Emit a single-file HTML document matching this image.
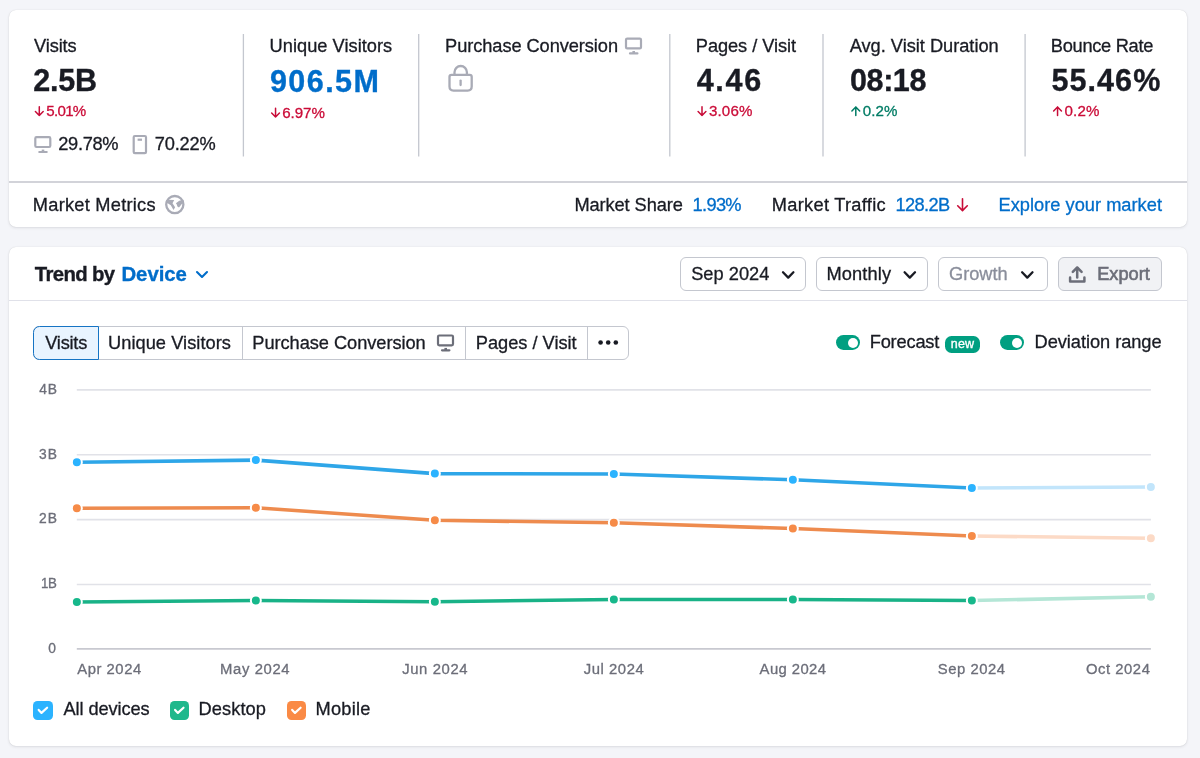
<!DOCTYPE html>
<html lang="en">
<head>
<meta charset="utf-8">
<title>Traffic Analytics – Trend by Device</title>
<style>
html,body{margin:0;padding:0;}
body{width:1200px;height:758px;overflow:hidden;background:#f4f5f9;font-family:"Liberation Sans",sans-serif;color:#191b23;}
#root{position:relative;width:1200px;height:758px;overflow:hidden;will-change:transform;}
.t{position:absolute;line-height:1;white-space:nowrap;-webkit-text-stroke:.3px currentColor;}
.t.b{-webkit-text-stroke:.35px currentColor;}
.t.m{-webkit-text-stroke:.6px currentColor;}
.t.n{-webkit-text-stroke:.35px currentColor;}
.card{position:absolute;background:#fff;border-radius:7px;box-shadow:0 0 1px rgba(25,27,35,.18),0 1px 3px rgba(25,27,35,.10);}
.vd{position:absolute;top:34px;height:122.6px;width:1.3px;background:#c4c7cf;}
.hd{position:absolute;left:9px;width:1178px;}
.btn{position:absolute;box-sizing:border-box;border:1px solid #c4c7cf;border-radius:6px;background:#fff;}
.tabs{position:absolute;box-sizing:border-box;border:1px solid #c4c7cf;border-radius:6px;background:#fff;}
.sep{position:absolute;width:1px;background:#c4c7cf;}
.tog{position:absolute;height:14.8px;width:24.6px;border-radius:7.4px;background:#009f81;}
.tog i{position:absolute;right:2px;top:2.2px;width:10.4px;height:10.4px;border-radius:50%;background:#fff;}
.cb{position:absolute;width:19.4px;height:19.4px;border-radius:4.5px;}
svg{position:absolute;left:0;top:0;overflow:visible;}
</style>
</head>
<body>
<div id="root">
<div class="card" style="left:9px;top:9.5px;width:1178px;height:217px;"></div>
<div class="card" style="left:9px;top:247px;width:1178px;height:499.3px;"></div>

<div class="hd" style="top:181px;height:2px;background:#d2d3d9;"></div>
<div class="hd" style="top:300px;height:1px;background:#e0e1e9;"></div>

<!-- header buttons -->
<div class="btn" style="left:680px;top:257px;width:126px;height:34px;"></div>
<div class="btn" style="left:816px;top:257px;width:112px;height:34px;"></div>
<div class="btn" style="left:938px;top:257px;width:110px;height:34px;"></div>
<div class="btn" style="left:1058px;top:257px;width:104px;height:34px;background:#f1f2f5;"></div>

<!-- tabs -->
<div class="tabs" style="left:33px;top:326px;width:596px;height:34px;"></div>
<div class="sep" style="left:241.5px;top:327px;height:32px;"></div>
<div class="sep" style="left:465px;top:327px;height:32px;"></div>
<div class="sep" style="left:587px;top:327px;height:32px;"></div>
<div style="position:absolute;box-sizing:border-box;left:33px;top:326px;width:66px;height:34px;border:1px solid #1674c4;border-radius:6.5px 0 0 6.5px;background:#e9f4ff;"></div>

<!-- toggles -->
<div class="tog" style="left:835.6px;top:335.4px;"><i></i></div>
<div class="tog" style="left:999.8px;top:335.4px;"><i></i></div>
<div style="position:absolute;left:944.7px;top:335.8px;width:35.4px;height:16.8px;border-radius:6.5px;background:#009f81;"></div>

<!-- legend checkboxes -->
<div class="cb" style="left:33.3px;top:700.5px;background:#2bb3ff;"></div>
<div class="cb" style="left:169.7px;top:700.5px;background:#1fb88c;"></div>
<div class="cb" style="left:286.8px;top:700.5px;background:#fa8a45;"></div>

<svg width="1200" height="758" viewBox="0 0 1200 758" fill="none">
<!-- metric dividers -->
<path d="M243.4 33.9V156.5M418.7 33.9V156.5M669.8 33.9V156.5M823 33.9V156.5M1025.1 33.9V156.5" stroke="#c4c7cf" stroke-width="1.3"/>
<!-- grid -->
<g stroke="#e1e2e8" stroke-width="1.6">
<path d="M76.8 389.9H1150.9M76.8 454.75H1150.9M76.8 519.6H1150.9M76.8 584.45H1150.9"/>
</g>
<path d="M76.8 648.9H1150.9" stroke="#c8c9d0" stroke-width="1.9"/>
<!-- forecast lines -->
<g stroke-width="3.6" stroke-linecap="butt" stroke-linejoin="round">
<path d="M971.85 488L1150.85 487" stroke="#c2e5fb"/>
<path d="M971.85 536L1150.85 538.3" stroke="#fcdac6"/>
<path d="M971.85 600.5L1150.85 596.8" stroke="#b4e6d6"/>
<path d="M76.85 462.3L255.85 460.1L434.85 473.6L613.85 474L792.85 479.8L971.85 488" stroke="#2ea6e8"/>
<path d="M76.85 508.3L255.85 507.8L434.85 520.3L613.85 522.8L792.85 528.5L971.85 536" stroke="#ee8b4e"/>
<path d="M76.85 602L255.85 600.5L434.85 601.7L613.85 599.5L792.85 599.5L971.85 600.5" stroke="#19b287"/>
</g>
<g stroke="#fff" stroke-width="2">
<g fill="#2bb3ff"><circle cx="76.85" cy="462.3" r="5"/><circle cx="255.85" cy="460.1" r="5"/><circle cx="434.85" cy="473.6" r="5"/><circle cx="613.85" cy="474" r="5"/><circle cx="792.85" cy="479.8" r="5"/><circle cx="971.85" cy="488" r="5"/></g>
<g fill="#f68b48"><circle cx="76.85" cy="508.3" r="5"/><circle cx="255.85" cy="507.8" r="5"/><circle cx="434.85" cy="520.3" r="5"/><circle cx="613.85" cy="522.8" r="5"/><circle cx="792.85" cy="528.5" r="5"/><circle cx="971.85" cy="536" r="5"/></g>
<g fill="#17b88b"><circle cx="76.85" cy="602" r="5"/><circle cx="255.85" cy="600.5" r="5"/><circle cx="434.85" cy="601.7" r="5"/><circle cx="613.85" cy="599.5" r="5"/><circle cx="792.85" cy="599.5" r="5"/><circle cx="971.85" cy="600.5" r="5"/></g>
<circle cx="1150.85" cy="487" r="5" fill="#c2e5fb"/><circle cx="1150.85" cy="538.3" r="5" fill="#fcdac6"/><circle cx="1150.85" cy="596.8" r="5" fill="#b4e6d6"/>
</g>

<!-- checkmarks -->
<g stroke="#fff" stroke-width="2.2" stroke-linecap="round" stroke-linejoin="round">
<path d="M38.7 709.9L41.5 712.9L47.1 707.7"/>
<path d="M175.1 709.9L177.9 712.9L183.5 707.7"/>
<path d="M292.2 709.9L295.0 712.9L300.6 707.7"/>
</g>

<!-- chevrons -->
<g stroke="#191b23" stroke-width="2.3" stroke-linecap="round" stroke-linejoin="round">
<path d="M783 272.3L788.2 277.6L793.4 272.3"/>
<path d="M904.6 272.3L909.8 277.6L915 272.3"/>
<path d="M1022.1 272.3L1027.3 277.6L1032.5 272.3"/>
</g>
<path d="M197 272L202 277L207 272" stroke="#006dca" stroke-width="2.1" stroke-linecap="round" stroke-linejoin="round"/>

<!-- more dots -->
<g fill="#191b23"><circle cx="600.6" cy="342.5" r="2.3"/><circle cx="608.2" cy="342.5" r="2.3"/><circle cx="615.8" cy="342.5" r="2.3"/></g>

<!-- desktop icons -->
<g stroke="#a9abb6" stroke-width="2.2" fill="none" stroke-linejoin="round">
<rect x="35.3" y="137.2" width="15" height="9.8" rx="1.2"/>
<path d="M39.3 152H46.7" stroke-linecap="round"/><path d="M43 149.6V152" stroke-width="2.6"/>
</g>
<g stroke="#a9abb6" stroke-width="2.2" fill="none" stroke-linejoin="round">
<rect x="626" y="38.6" width="15" height="9.8" rx="1.2"/>
<path d="M630 53.4H637.4" stroke-linecap="round"/><path d="M633.7 51V53.4" stroke-width="2.6"/>
</g>
<g stroke="#6c6e79" stroke-width="2.2" fill="none" stroke-linejoin="round">
<rect x="438" y="335.5" width="15" height="9.8" rx="1.2"/>
<path d="M442 350.3H449.4" stroke-linecap="round"/><path d="M445.7 347.9V350.3" stroke-width="2.6"/>
</g>
<!-- phone icon -->
<g stroke="#a9abb6" stroke-width="2.2" fill="none" stroke-linejoin="round">
<rect x="133.7" y="136" width="12.3" height="17.2" rx="1.2"/>
<path d="M137.6 139.7H142"/>
</g>
<!-- lock -->
<g stroke="#a9abb6" stroke-width="2.3" fill="none" stroke-linecap="round" stroke-linejoin="round">
<path d="M451.5 74.8H469.7Q471.7 74.8 471.7 76.8V86.6Q471.7 90.6 467.7 90.6H453.5Q449.5 90.6 449.5 86.6V76.8Q449.5 74.8 451.5 74.8Z"/>
<path d="M454.5 74.5V72.2A6.2 6.2 0 0 1 466.9 72.2V74.5"/>
<path d="M460.6 80.6V85"/>
</g>
<!-- globe -->
<g>
<circle cx="174.8" cy="204.6" r="8.6" stroke="#a9abb6" stroke-width="2.3"/>
<path d="M166 200.8L167.4 199.8L174.2 199.9L172.5 203.2L175.1 207.2L173.5 210L170.8 205.3L167.7 203.3L165.8 203Z" fill="#a9abb6"/>
<path d="M175.9 203.2L179.3 200.7L183.4 199.8L184 202.9L182.2 203.6L179 207.5L177.4 206.4L176.8 204.5Z" fill="#a9abb6"/>
</g>
<!-- export icon -->
<g stroke="#6c6e79" stroke-width="2.5" fill="none" stroke-linecap="round" stroke-linejoin="round">
<path d="M1070.1 277.6V281.5H1084.4V277.6"/>
<path d="M1077.2 277.4V268"/>
<path d="M1072.8 271.9L1077.2 267.5L1081.6 271.9"/>
</g>
<!-- arrows -->
<g stroke="#c80c38" stroke-width="1.5" fill="none" stroke-linecap="round" stroke-linejoin="round">
<path d="M39.3 106.8V115.5M35.4 111.5L39.3 115.5L43.199999999999996 111.5"/>
<path d="M275.55 108.3V117.0M271.65000000000003 113.0L275.55 117.0L279.45 113.0"/>
<path d="M702 106.8V115.5M698.1 111.5L702 115.5L705.9 111.5"/>
<path d="M1057.55 115.6V106.89999999999999M1053.6499999999999 110.89999999999999L1057.55 106.89999999999999L1061.45 110.89999999999999"/>
</g>
<path d="M855.8 115.6V106.89999999999999M851.9 110.89999999999999L855.8 106.89999999999999L859.6999999999999 110.89999999999999" stroke="#007c65" stroke-width="1.5" fill="none" stroke-linecap="round" stroke-linejoin="round"/>
<path d="M962.5 198.7V210.6M957.7 205.79999999999998L962.5 210.6L967.3 205.79999999999998" stroke="#c80c38" stroke-width="1.6" fill="none" stroke-linecap="round" stroke-linejoin="round"/>
</svg>

<span class="t" style="left:34.08px;top:36.58px;font-size:18.24px;letter-spacing:-0.136px;color:#191b23;">Visits</span>
<span class="t" style="left:269.58px;top:36.58px;font-size:18.24px;letter-spacing:0.025px;color:#191b23;">Unique Visitors</span>
<span class="t" style="left:445.09px;top:36.58px;font-size:18.24px;letter-spacing:-0.076px;color:#191b23;">Purchase Conversion</span>
<span class="t" style="left:695.81px;top:36.58px;font-size:18.24px;letter-spacing:-0.070px;color:#191b23;">Pages / Visit</span>
<span class="t" style="left:849.69px;top:36.58px;font-size:18.24px;letter-spacing:-0.018px;color:#191b23;">Avg. Visit Duration</span>
<span class="t" style="left:1050.81px;top:36.58px;font-size:18.24px;letter-spacing:-0.284px;color:#191b23;">Bounce Rate</span>
<span class="t b" style="left:33.24px;top:65.18px;font-size:30.52px;letter-spacing:-0.240px;color:#191b23;font-weight:700;">2.5B</span>
<span class="t b" style="left:269.92px;top:66.18px;font-size:30.52px;letter-spacing:1.451px;color:#006dca;font-weight:700;">906.5M</span>
<span class="t b" style="left:696.72px;top:65.18px;font-size:30.52px;letter-spacing:1.664px;color:#191b23;font-weight:700;">4.46</span>
<span class="t b" style="left:850.08px;top:65.18px;font-size:30.52px;letter-spacing:-0.436px;color:#191b23;font-weight:700;">08:18</span>
<span class="t b" style="left:1051.47px;top:65.18px;font-size:30.52px;letter-spacing:1.062px;color:#191b23;font-weight:700;">55.46%</span>
<span class="t" style="left:46.28px;top:103.22px;font-size:15.12px;letter-spacing:-0.702px;color:#cb0c38;">5.01%</span>
<span class="t" style="left:282.28px;top:105.22px;font-size:15.12px;letter-spacing:-0.068px;color:#cb0c38;">6.97%</span>
<span class="t" style="left:708.89px;top:103.22px;font-size:15.12px;letter-spacing:0.196px;color:#cb0c38;">3.06%</span>
<span class="t" style="left:862.83px;top:103.22px;font-size:15.12px;letter-spacing:0.031px;color:#007c65;">0.2%</span>
<span class="t" style="left:1064.62px;top:103.22px;font-size:15.12px;letter-spacing:0.104px;color:#cb0c38;">0.2%</span>
<span class="t" style="left:58.26px;top:134.58px;font-size:18.24px;letter-spacing:-0.308px;color:#191b23;">29.78%</span>
<span class="t" style="left:154.73px;top:134.58px;font-size:18.24px;letter-spacing:-0.183px;color:#191b23;">70.22%</span>
<span class="t" style="left:32.81px;top:195.58px;font-size:18.24px;letter-spacing:0.250px;color:#191b23;">Market Metrics</span>
<span class="t" style="left:574.43px;top:195.58px;font-size:18.24px;letter-spacing:-0.093px;color:#191b23;">Market Share</span>
<span class="t" style="left:692.60px;top:195.58px;font-size:18.24px;letter-spacing:-0.686px;color:#006dca;">1.93%</span>
<span class="t" style="left:771.86px;top:195.58px;font-size:18.24px;letter-spacing:0.279px;color:#191b23;">Market Traffic</span>
<span class="t" style="left:895.47px;top:195.58px;font-size:18.24px;letter-spacing:-0.619px;color:#006dca;">128.2B</span>
<span class="t" style="left:998.52px;top:195.58px;font-size:18.24px;letter-spacing:0.017px;color:#006dca;">Explore your market</span>
<span class="t b" style="left:34.82px;top:263.79px;font-size:20.35px;letter-spacing:-0.656px;color:#191b23;font-weight:700;">Trend by</span>
<span class="t b" style="left:121.49px;top:263.79px;font-size:20.35px;letter-spacing:-0.057px;color:#006dca;font-weight:700;">Device</span>
<span class="t" style="left:691.17px;top:264.58px;font-size:18.24px;letter-spacing:0.018px;color:#191b23;">Sep 2024</span>
<span class="t" style="left:826.54px;top:264.58px;font-size:18.24px;letter-spacing:0.119px;color:#191b23;">Monthly</span>
<span class="t" style="left:949.01px;top:264.58px;font-size:18.24px;letter-spacing:-0.017px;color:#8a8e9b;">Growth</span>
<span class="t m" style="left:1097.18px;top:264.58px;font-size:18.24px;letter-spacing:-0.015px;color:#6c6e79;">Export</span>
<span class="t" style="left:45.27px;top:333.58px;font-size:18.24px;letter-spacing:-0.239px;color:#191b23;">Visits</span>
<span class="t" style="left:107.99px;top:333.58px;font-size:18.24px;letter-spacing:0.049px;color:#191b23;">Unique Visitors</span>
<span class="t" style="left:252.30px;top:333.58px;font-size:18.24px;letter-spacing:-0.052px;color:#191b23;">Purchase Conversion</span>
<span class="t" style="left:475.81px;top:333.58px;font-size:18.24px;letter-spacing:-0.011px;color:#191b23;">Pages / Visit</span>
<span class="t" style="left:869.71px;top:332.58px;font-size:18.24px;letter-spacing:-0.182px;color:#191b23;">Forecast</span>
<span class="t" style="left:1034.56px;top:332.58px;font-size:18.24px;letter-spacing:-0.047px;color:#191b23;">Deviation range</span>
<span class="t n" style="left:950.70px;top:338.44px;font-size:12.5px;letter-spacing:0.245px;color:#ffffff;">new</span>
<span class="t" style="left:39.25px;top:383.33px;font-size:13.81px;letter-spacing:0.937px;color:#6c6e79;">4B</span>
<span class="t" style="left:38.91px;top:448.33px;font-size:13.81px;letter-spacing:1.184px;color:#6c6e79;">3B</span>
<span class="t" style="left:38.99px;top:512.33px;font-size:13.81px;letter-spacing:1.107px;color:#6c6e79;">2B</span>
<span class="t" style="left:41.24px;top:577.33px;font-size:13.81px;letter-spacing:-0.500px;color:#6c6e79;transform:scaleX(0.9629);transform-origin:0 0;">1B</span>
<span class="t" style="left:48.21px;top:642.33px;font-size:13.81px;letter-spacing:0.000px;color:#6c6e79;">0</span>
<span class="t" style="left:77.30px;top:662.47px;font-size:14.83px;letter-spacing:0.525px;color:#6c6e79;">Apr 2024</span>
<span class="t" style="left:220.12px;top:662.47px;font-size:14.83px;letter-spacing:0.615px;color:#6c6e79;">May 2024</span>
<span class="t" style="left:402.16px;top:662.47px;font-size:14.83px;letter-spacing:0.624px;color:#6c6e79;">Jun 2024</span>
<span class="t" style="left:583.80px;top:662.47px;font-size:14.83px;letter-spacing:0.545px;color:#6c6e79;">Jul 2024</span>
<span class="t" style="left:759.60px;top:662.47px;font-size:14.83px;letter-spacing:0.422px;color:#6c6e79;">Aug 2024</span>
<span class="t" style="left:937.85px;top:662.47px;font-size:14.83px;letter-spacing:0.537px;color:#6c6e79;">Sep 2024</span>
<span class="t" style="left:1085.88px;top:662.47px;font-size:14.83px;letter-spacing:0.553px;color:#6c6e79;">Oct 2024</span>
<span class="t" style="left:63.39px;top:699.58px;font-size:18.24px;letter-spacing:-0.082px;color:#191b23;">All devices</span>
<span class="t" style="left:198.43px;top:699.58px;font-size:18.24px;letter-spacing:0.109px;color:#191b23;">Desktop</span>
<span class="t" style="left:315.58px;top:699.58px;font-size:18.24px;letter-spacing:0.221px;color:#191b23;">Mobile</span>
</div>
</body>
</html>
